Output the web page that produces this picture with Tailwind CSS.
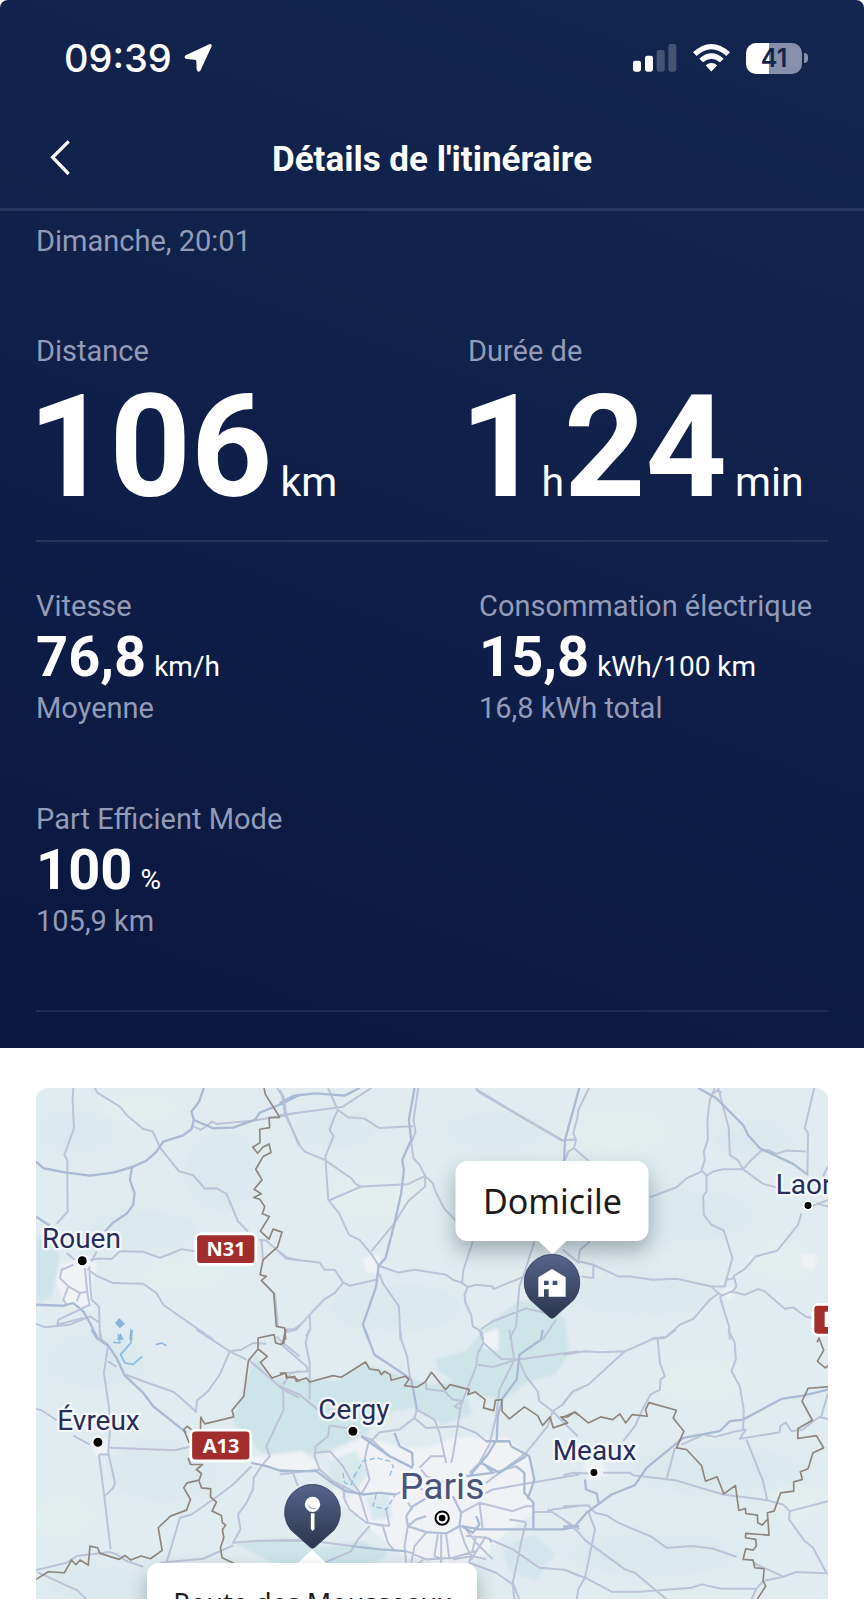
<!DOCTYPE html>
<html lang="fr">
<head>
  <meta charset="UTF-8">
  <meta name="viewport" content="width=device-width, initial-scale=1.0">
  <title>Détails de l'itinéraire</title>
  <script src="https://cdn.jsdelivr.net/npm/@tailwindcss/browser@4"></script>
</head>
<body class="bg-white font-['Roboto',sans-serif]">
  <div class="min-h-screen flex flex-col">
    <div class="rounded-t-lg bg-linear-200 from-[#13264f] via-[#0f1f49] to-[#0a1740] text-white pb-9">

      <!-- Status bar -->
      <div class="h-28 pt-1 pl-16 pr-14 flex items-center justify-between">
        <div class="flex items-center gap-3 font-['Inter',sans-serif]">
          <span class="text-[38px] font-medium">09:39</span>
          <svg class="w-7 h-7" viewBox="0 0 84 84" fill="#fff"><path d="M76 1 L5 34 Q-2 41 7 45 L33 47 Q37 47 37 52 L38 77 Q42 87 49 80 L83 7 Q84 -2 76 1Z"/></svg>
        </div>
        <div class="flex items-center gap-4">
          <svg class="w-11 h-7" viewBox="0 0 132 84">
            <rect x="0" y="50" width="24" height="33" rx="7" fill="#fff"/>
            <rect x="36" y="35" width="24" height="48" rx="7" fill="#fff"/>
            <rect x="71" y="18" width="24" height="65" rx="7" fill="#fff" fill-opacity=".22"/>
            <rect x="106" y="0" width="24" height="83" rx="7" fill="#fff" fill-opacity=".22"/>
          </svg>
          <svg class="w-[37px] h-7" viewBox="0 0 111 84" fill="#fff">
            <path d="M0 25 Q55 -25 111 25 L100 36 Q55 -4 11 36Z"/>
            <path d="M19 44 Q55 12 92 44 L81 55 Q55 33 30 55Z"/>
            <path d="M38 64 Q55 50 73 64 L56 82 Q55 83 54 82Z"/>
          </svg>
          <div class="flex items-center gap-[2px]">
            <div class="w-[56px] h-[31px] rounded-[10px] bg-linear-to-r from-white from-41% to-[#8690aa] to-41% text-center text-[25px] leading-[31px] font-semibold text-[#12254f] font-['Inter',sans-serif]">41</div>
            <div class="w-1 h-[10px] rounded-r-full bg-[#8690aa]"></div>
          </div>
        </div>
      </div>

      <!-- Header -->
      <header class="h-24 px-9 grid grid-cols-[48px_1fr_48px] items-center">
        <button aria-label="Retour" class="w-12 h-12 flex justify-center">
          <svg class="mt-1 w-5 h-9" viewBox="0 0 60 108" fill="none" stroke="#fff" stroke-width="10"><path d="M56 4 L8 52 L56 102"/></svg>
        </button>
        <h1 class="text-center text-[35px] font-bold">Détails de l'itinéraire</h1>
      </header>
      <div class="h-[3px] bg-[#273760]"></div>

      <div class="px-9">
        <p class="mt-[10px] text-[29px] leading-10 text-[#929bb8]">Dimanche, 20:01</p>

        <div class="mt-[70px] pb-5 grid grid-cols-2 gap-[72px] border-b-2 border-[#273459]">
          <div>
            <p class="text-[29px] leading-10 text-[#929bb8]">Distance</p>
            <p class="-ml-2 mt-[5px] flex items-baseline gap-2 whitespace-nowrap">
              <span class="text-[142px] leading-[144px] font-bold">106</span>
              <span class="text-[41px] leading-none">km</span>
            </p>
          </div>
          <div>
            <p class="text-[29px] leading-10 text-[#929bb8]">Durée de</p>
            <p class="-ml-2 mt-[5px] flex items-baseline whitespace-nowrap">
              <span class="text-[142px] leading-[144px] font-bold">1</span>
              <span class="text-[41px] leading-none">h</span>
              <span class="text-[142px] leading-[144px] font-bold">24</span>
              <span class="pl-2 text-[41px] leading-none">min</span>
            </p>
          </div>
        </div>

        <div class="mt-11 pb-[69px] grid grid-cols-2 gap-x-[94px] gap-y-[71px] border-b-2 border-[#202c55]">
          <div>
            <p class="text-[29px] leading-10 text-[#929bb8]">Vitesse</p>
            <p class="flex items-baseline gap-2 whitespace-nowrap">
              <span class="text-[56px] leading-[62px] font-bold">76,8</span>
              <span class="text-[28px] leading-none">km/h</span>
            </p>
            <p class="text-[29px] leading-10 text-[#929bb8]">Moyenne</p>
          </div>
          <div>
            <p class="text-[29px] leading-10 text-[#929bb8] whitespace-nowrap">Consommation électrique</p>
            <p class="flex items-baseline gap-2 whitespace-nowrap">
              <span class="text-[56px] leading-[62px] font-bold">15,8</span>
              <span class="text-[28px] leading-none">kWh/100 km</span>
            </p>
            <p class="text-[29px] leading-10 text-[#929bb8]">16,8 kWh total</p>
          </div>
          <div>
            <p class="text-[29px] leading-10 text-[#929bb8] whitespace-nowrap">Part Efficient Mode</p>
            <p class="flex items-baseline gap-2 whitespace-nowrap">
              <span class="text-[56px] leading-[62px] font-bold">100</span>
              <span class="text-[28px] leading-none">%</span>
            </p>
            <p class="text-[29px] leading-10 text-[#929bb8]">105,9 km</p>
          </div>
        </div>
      </div>
    </div>

    <!-- Map -->
    <div class="mx-9 mt-10 relative overflow-hidden rounded-t-xl">
      <svg class="block w-full" viewBox="0 0 2379 1536" fill="none" stroke-linejoin="round">
        <defs>
          <filter id="soft" x="-20%" y="-20%" width="140%" height="140%"><feGaussianBlur stdDeviation="22"/></filter>
          <filter id="edge" x="-10%" y="-10%" width="120%" height="120%"><feGaussianBlur stdDeviation="5"/></filter>
        </defs>
        <rect width="2379" height="1536" fill="#e0ecef"/>

        <!-- relief -->
        <g filter="url(#soft)">
          <g fill="#d9e9ee">
            <ellipse cx="120" cy="130" rx="120" ry="60"/><ellipse cx="560" cy="250" rx="110" ry="120"/><ellipse cx="320" cy="430" rx="170" ry="60"/>
            <ellipse cx="900" cy="120" rx="120" ry="60"/><ellipse cx="1080" cy="660" rx="200" ry="70"/><ellipse cx="1900" cy="380" rx="260" ry="80"/>
            <ellipse cx="2150" cy="150" rx="120" ry="50"/><ellipse cx="1820" cy="620" rx="220" ry="60"/><ellipse cx="380" cy="1150" rx="160" ry="90"/>
            <ellipse cx="2050" cy="1150" rx="260" ry="70"/><ellipse cx="1850" cy="1400" rx="260" ry="60"/><ellipse cx="180" cy="820" rx="150" ry="80"/>
            <ellipse cx="1380" cy="130" rx="160" ry="50"/><ellipse cx="180" cy="1490" rx="150" ry="50"/>
          </g>
          <g fill="#e4eeee">
            <ellipse cx="300" cy="60" rx="120" ry="40"/><ellipse cx="450" cy="560" rx="130" ry="40"/><ellipse cx="1000" cy="330" rx="150" ry="60"/>
            <ellipse cx="1750" cy="130" rx="150" ry="60"/><ellipse cx="2000" cy="880" rx="140" ry="50"/><ellipse cx="2250" cy="520" rx="100" ry="50"/>
            <ellipse cx="80" cy="1290" rx="90" ry="60"/><ellipse cx="2280" cy="1240" rx="90" ry="50"/>
          </g>
        </g>
        <!-- woodland -->
        <g fill="#cde4e8" filter="url(#edge)">
          <path d="M0 440 L70 500 50 620 0 650Z"/>
          <path d="M660 800 L700 870 900 880 990 830 1080 860 1180 890 1280 880 1310 980 1220 1010 1130 960 1040 980 990 1040 900 1080 720 1130 640 1060 590 1000Z"/>
          <path d="M1200 815 L1290 790 1370 700 1450 640 1550 650 1590 700 1600 800 1560 860 1480 880 1400 940 1300 910 1210 850Z"/>
          <path d="M600 1370 L740 1350 860 1380 980 1360 1060 1400 1000 1440 720 1430Z"/>
          <path d="M1400 1380 L1500 1340 1560 1400 1500 1480 1420 1450Z" fill="#d3e6eb"/>
        </g>
        <!-- built-up areas -->
        <g fill="#f0f2f6" filter="url(#edge)">
          <path d="M80 530 L150 500 185 530 165 600 170 670 90 650 60 580Z"/>
          <path d="M880 1100 L980 1050 1110 1080 1180 1080 1260 1050 1420 1050 1490 1120 1490 1280 1420 1330 1350 1400 1260 1440 1110 1410 1010 1330 900 1230Z"/>
          <path d="M630 1110 L800 1090 860 1140 780 1160 650 1130Z"/>
          <path d="M1340 740 L1390 720 1390 790 1340 780Z"/><path d="M980 510 L1035 500 1030 560 990 550Z"/>
          <path d="M170 1070 L220 1050 220 1100 180 1105Z"/><path d="M1640 1130 L1700 1120 1720 1165 1660 1180Z"/>
          <path d="M2075 600 L2100 600 2090 640 2060 620Z"/><path d="M2295 500 L2345 500 2340 545 2305 540Z"/>
        </g>
        <g fill="#d8e9ee" filter="url(#edge)">
          <path d="M880 1120 L960 1090 1000 1160 940 1230 880 1190Z"/><path d="M990 1230 L1060 1220 1070 1290 1010 1300Z"/>
        </g>

        <!-- north west -->
        <g transform="translate(-108 -84)">
          <path stroke="#bcc2d8" stroke-width="6" d="M220 84 L218 120 222 205 193 285 202 300 203 455 170 492 M285 84 L292 98 360 140 380 165 430 207 458 214 480 262 537 334 580 346 615 386 650 385 680 402 715 485 745 515 M270 600 L300 596 335 598 360 574 430 576 480 594 505 585 545 568 590 575 M262 628 L290 648 340 670 430 672 470 700 490 735 640 840 M582 200 L603 210 637 185 650 192 760 182 900 158 M833 84 L848 110 855 160 900 255 M785 540 L790 600 M778 540 L800 542 825 565 860 592 900 602 M825 700 L835 800 M270 735 L240 750 175 780 172 795 250 775 M108 792 L135 803 210 795 270 770 300 790 M255 625 L262 700 270 740 M268 620 L272 690 275 720 297 740 300 840 M205 680 L190 720 200 735 M220 615 L185 630 180 655 205 680 240 700 230 725 M240 700 L265 695 M200 580 L225 600 M290 575 L275 605 M855 810 L885 808 900 795"/>
          <path stroke="#a9bad4" stroke-width="7" d="M108 305 L130 325 200 338 270 347 340 338 400 320 440 302 470 275 490 245 550 226 575 208 582 180 575 155 598 125 612 84 M582 180 L640 205 700 203 765 180 780 158 850 130 900 104 M397 318 L390 360 404 400 400 435 380 462 340 488 315 515 M108 470 L150 498 M108 735 L190 738 220 730 250 755 270 790 295 840"/>
          <path stroke="#8f857d" stroke-width="5" d="M793 84 L797 103 840 172 808 173 810 203 780 208 781 248 759 262 774 280 789 262 808 252 814 278 790 290 768 328 787 360 763 388 785 402 762 413 780 418 795 440 788 462 809 470 782 514 808 538 820 508 847 517 833 562 790 600 781 645 800 650 785 662 822 700 830 800 855 805 858 840"/>
          <path fill="#8db4dc" d="M345 790 L358 776 376 792 360 806Z M350 840 L362 820 372 840Z M392 800 L398 840 388 840Z"/>
        </g>

        <!-- north -->
        <g transform="translate(732 -84)">
          <path stroke="#bcc2d8" stroke-width="6" d="M145 84 L175 150 205 172 255 176 298 204 400 199 M0 166 L190 140 275 84 M175 150 L163 175 150 210 162 228 137 290 146 420 178 460 208 525 240 540 275 582 298 618 M0 90 L12 110 20 165 55 250 75 275 135 300 215 355 228 372 245 380 385 373 437 348 M148 422 L245 380 M416 84 L402 180 408 215 395 250 402 295 420 315 437 348 437 380 385 425 345 490 275 575 M437 348 L460 370 468 395 495 447 530 483 M590 84 L600 98 850 242 888 238 M0 578 L20 597 120 608 135 630 165 630 190 667 210 678 260 667 290 660 M190 670 L165 700 135 718 90 765 50 810 20 818 M90 765 L92 810 78 830 M297 618 L355 638 405 630 500 645 520 660 545 668 565 682 590 675 640 680 642 688 730 652 M298 640 L310 670 358 740 363 840 M580 545 L552 630 548 668 M565 682 L555 705 558 730 575 765 580 800 605 815 612 840 M605 808 L640 785 740 746 800 760 M765 545 L735 640 720 680 710 800 690 840 M830 780 L810 810 790 840 M850 570 L900 610"/>
          <path stroke="#a9bad4" stroke-width="7" d="M0 130 L40 108 105 100 195 107 240 84 M405 84 L388 180 395 240 368 300 373 330 365 400 345 490 318 595 297 618 290 680 250 795 268 840"/>
          <path stroke="#bcc2d8" stroke-width="8" d="M590 88 L700 155 850 242"/>
        </g>

        <!-- north east -->
        <g transform="translate(1584 -84)">
          <path stroke="#bcc2d8" stroke-width="6" d="M77 84 L45 150 42 175 30 220 38 240 32 265 15 275 5 300 M5 240 L38 240 M32 265 L75 302 M455 84 L440 120 433 180 434 240 422 275 425 300 415 330 430 347 450 335 480 328 540 328 560 305 595 272 M465 84 L480 140 497 205 500 285 525 302 540 328 600 372 650 385 M450 100 L465 90 475 100 M595 272 L615 270 640 282 670 272 730 275 M753 84 L750 100 725 205 735 220 733 345 M260 412 L340 382 370 355 415 335 M430 347 L430 395 420 410 422 465 445 495 482 512 508 595 485 675 M715 460 L705 495 642 573 578 590 545 628 512 648 520 680 505 700 M48 605 L90 615 165 650 200 650 268 660 340 657 445 680 485 680 490 660 515 655 M90 615 L90 655 55 650 M45 605 L50 570 80 545 M445 682 L475 708 505 695 545 705 585 688 605 695 665 747 690 743 730 772 750 775 M465 702 L440 720 390 778 350 795 305 835 265 838 M470 710 L485 760 498 800 500 840 M795 320 L780 350 M745 440 L795 420 M760 430 L795 440"/>
          <path stroke="#a9bad4" stroke-width="7" d="M48 84 L5 240 2 310 M405 84 L460 115 540 195 555 225 590 265 690 312 735 345"/>
        </g>

        <!-- south west -->
        <g transform="translate(-108 726)">
          <path stroke="#bcc2d8" stroke-width="6" d="M300 0 L305 30 325 45 312 130 328 240 330 300 325 370 M325 95 L350 112 M378 135 L430 155 522 187 560 220 590 248 M590 0 L690 65 740 90 M690 65 L660 135 635 170 625 185 592 212 588 250 M690 65 L725 60 760 40 800 42 M108 238 L125 242 170 272 M220 318 L270 345 M330 355 L525 362 575 350 M297 375 L313 500 332 660 M325 370 L345 460 340 475 315 500 M297 375 L325 375 M108 722 L200 700 230 680 330 668 350 675 380 695 430 712 M500 700 L515 650 540 565 575 555 640 510 700 465 755 410 M785 410 L762 445 760 480 740 520 715 555 722 600 700 640 770 635 900 632 M480 700 L610 688 700 648 M112 728 L232 783 260 810 M850 180 L852 240 800 350 810 380 785 410 M880 430 L895 470 M750 93 L850 180 900 205 M850 165 L875 130 900 125 M830 20 L850 40 900 80"/>
          <path stroke="#a9bad4" stroke-width="7" d="M275 0 L290 25 325 48 350 85 375 138 430 190 460 230 560 310 M755 400 L800 410 840 423 900 425"/>
          <path stroke="#8db8e0" stroke-width="5" d="M397 0 L393 40 362 75 375 100 400 104 427 80 M340 38 L360 40 355 12 M468 45 L485 40 500 48"/>
          <path stroke="#8f857d" stroke-width="5" d="M858 0 L848 45 828 40 823 15 775 25 775 58 803 80 782 98 817 145 858 130 863 143 885 145 900 155 M775 58 L746 93 732 200 697 242 702 262 615 283 603 263 602 300 M575 300 L562 290 552 300 568 340 M565 385 L572 405 608 405 590 420 605 432 598 452 562 460 552 475 572 510 560 542 512 560 475 595 487 663 452 688 423 680 393 692 375 678 358 690 300 672 293 655 270 650 265 707 240 692 228 706 215 692 193 730 145 727 108 750 M598 455 L605 475 633 478 632 502 650 518 637 545 665 558 668 580 678 587 668 600 672 625 662 655 667 685 705 703"/>
        </g>

        <!-- Paris area -->
        <g transform="translate(732 726)">
          <path stroke="#bcc2d8" stroke-width="6" d="M362 0 L365 30 383 80 392 150 M88 0 L78 40 90 100 90 210 M0 170 L60 195 120 245 M0 40 L80 110 85 125 20 130 M600 0 L612 40 595 70 590 110 545 225 520 380 515 400 M612 40 L635 60 665 87 712 90 M595 105 L640 112 712 90 900 65 M690 0 L700 60 705 90 660 180 650 260 630 345 600 400 570 430 M720 95 L740 140 775 185 780 215 820 245 895 320 M820 245 L850 225 880 185 900 178 M820 245 L805 290 740 370 620 460 M440 160 L440 178 495 185 520 210 550 215 525 230 545 240 M412 240 L405 265 360 300 300 308 265 345 255 390 270 450 245 495 M245 320 L275 330 330 380 400 415 M412 240 L465 270 480 310 500 400 M405 265 L440 295 540 290 590 310 620 335 690 335 M150 285 L145 320 108 350 105 380 120 420 160 455 240 495 265 580 310 590 M108 370 L150 365 190 410 215 455 245 495 M155 288 L220 300 M190 500 L210 540 260 580 330 590 M190 470 L195 510 M270 590 L235 630 215 665 135 700 M0 635 L100 635 215 650 M420 415 L455 380 495 380 M425 420 L440 440 500 460 M310 590 L325 640 345 665 M320 540 L330 590 M350 495 L400 470 430 480 M380 700 L375 650 385 590 M400 540 L385 520 M440 610 L405 650 395 700 M475 615 L465 680 490 690 M500 615 L510 690 M485 615 L485 700 M540 590 L555 640 580 690 M560 600 L590 640 640 690 M620 620 L575 690 M640 430 L710 410 M600 500 L640 480 900 435 M545 550 L600 520 700 545 740 530 762 530 M600 520 L610 600 M690 570 L740 578 M740 580 L725 640 715 690 700 760 720 810 M590 620 L570 700 650 730 700 765 705 810 M560 620 L620 625 700 660 780 715 860 722 900 740 M765 548 L805 548 820 540 900 530 M805 540 L900 600 M120 420 L0 435 M430 690 L400 720 M520 690 L580 680 620 690 M380 665 L440 690 520 685 590 665"/>
          <path stroke="#b3bfd9" stroke-width="7" d="M380 560 L400 530 450 500 M520 500 L545 550 540 590 500 612 440 608 385 590 380 560 M385 590 L410 570 440 560"/>
          <path stroke="#a9bad4" stroke-width="7" d="M255 0 L285 75 360 125 395 150 405 200 412 240 M790 0 L785 30 720 75 712 150 670 205 655 260 652 330 625 375 570 440 M0 425 L110 425 150 455 200 485 250 495 300 490 350 495 M345 310 L360 350 398 370 400 410 M245 320 L330 380 400 415 M695 350 L750 380 765 450 745 510 M620 335 L690 335 695 350 M545 590 L600 600 850 600 900 590 M710 410 L735 430 735 490 762 520 762 600 M560 440 L640 430 620 410 M215 650 L300 660 380 665 M605 400 L660 430 740 380 M545 590 L580 610 600 585 590 560"/>
          <path stroke="#93bde0" stroke-width="4" stroke-dasharray="16 8" d="M225 440 L250 395 290 385 330 395 342 410 330 440 M290 495 L280 530 320 540 345 500 M190 430 L195 460 215 465 228 430 M630 625 L638 650"/>
          <path stroke="#8f857d" stroke-width="5" d="M0 130 L18 130 20 145 45 140 50 155 80 145 90 157 160 138 185 143 258 97 270 118 298 122 305 135 315 125 332 135 335 152 378 140 388 150 375 168 412 173 437 157 456 128 498 180 512 165 570 180 565 195 587 187 617 210 612 235 643 243 648 212 667 210 668 245 690 268 735 232 775 258 790 288 812 262 822 295 865 280 845 262 865 262 885 248 900 258 M0 45 L12 40 18 0"/>
        </g>

        <!-- south east -->
        <g transform="translate(1584 726)">
          <path stroke="#bcc2d8" stroke-width="6" d="M0 75 L65 65 110 68 185 65 275 25 310 22 338 0 M0 220 L30 185 75 165 185 65 M283 25 L290 100 305 140 292 150 290 180 262 195 240 235 215 290 180 335 M495 0 L515 40 518 90 505 125 530 170 542 240 540 300 M355 345 L400 325 420 315 455 322 520 305 548 300 530 328 650 308 652 290 668 278 685 305 720 300 750 275 770 262 795 268 M795 190 L775 260 M335 355 L310 450 M0 437 L30 430 75 432 M120 430 L200 430 210 437 335 452 480 495 610 512 660 525 680 545 795 515 M550 330 L600 455 612 510 M680 545 L678 570 725 635 750 655 790 730 M0 530 L75 527 95 550 130 558 165 580 265 622 310 655 390 650 450 658 520 682 M570 700 L660 742 700 728 795 732 M75 545 L95 600 65 745 45 780 40 810 M0 570 L45 608 65 632 185 720 215 730 310 810 M0 720 L65 745 145 787 230 787 385 775 415 765 475 778 580 778 600 755 660 742 M580 778 L565 810"/>
          <path stroke="#a9bad4" stroke-width="7" d="M0 592 L35 590 70 550 145 495 215 467 250 415 360 325 470 305 500 275 540 270 655 208 720 198 795 180 M65 450 L68 480 100 492 107 525"/>
          <path stroke="#8f857d" stroke-width="5" d="M0 262 L35 247 75 280 112 262 148 270 170 253 187 280 207 255 252 260 247 240 257 219 340 242 330 265 362 305 340 355 370 360 415 408 427 455 462 442 482 493 517 468 527 543 547 537 548 552 583 557 584 580 597 587 615 568 M795 172 L735 176 717 215 748 272 705 297 704 327 760 318 782 355 750 370 735 418 712 427 718 450 692 457 692 485 653 490 633 545 613 550 618 617 548 612 547 625 578 630 580 650 570 662 548 658 540 690 570 692 575 715 603 718 600 755 608 770 582 810 M762 38 L768 25 782 62 763 95 787 115 795 108"/>
        </g>

        <!-- road signs -->
        <g stroke="#fff" stroke-width="8" fill="#a12d2c">
          <rect x="480" y="438" width="180" height="92" rx="14"/>
          <rect x="465" y="1028" width="180" height="92" rx="14"/>
          <rect x="2334" y="650" width="180" height="92" rx="14"/>
        </g>
        <g fill="#fff" font-family="Noto Sans, sans-serif" font-weight="700" font-size="60" text-anchor="middle">
          <text x="571" y="505">N31</text>
          <text x="556" y="1096">A13</text>
        </g>
        <path d="M2374 672 V718" stroke="#fff" stroke-width="10"/>

        <!-- towns -->
        <g fill="#262d57" stroke="#f3f7fb" stroke-width="14" paint-order="stroke" font-family="Roboto, sans-serif" font-size="84">
          <text x="18" y="481">Rouen</text>
          <text x="2222" y="319">Laon</text>
          <text x="64" y="1028">Évreux</text>
          <text x="848" y="993">Cergy</text>
          <text x="1552" y="1117">Meaux</text>
        </g>
        <text x="1093" y="1236" font-family="Roboto, sans-serif" font-size="112" fill="#4a5379" stroke="#f3f7fb" stroke-width="14" paint-order="stroke">Paris</text>
        <g fill="#000" stroke="#fff" stroke-width="5">
          <circle cx="139" cy="519" r="16"/><circle cx="186" cy="1064" r="16"/><circle cx="952" cy="1031" r="16"/>
          <circle cx="1676" cy="1155" r="13"/><circle cx="2319" cy="353" r="13"/>
        </g>
        <circle cx="1220" cy="1292" r="20" fill="#fff" stroke="#000" stroke-width="6"/>
        <circle cx="1220" cy="1292" r="10" fill="#000"/>
      </svg>

      <!-- markers -->
      <div class="absolute left-[65.2%] top-[14.3%] -translate-x-1/2 flex flex-col items-center">
        <button class="w-[193px] h-20 rounded-xl bg-white text-[34px] text-[#1c1c1c] font-['Noto_Sans',sans-serif] shadow-[0_10px_20px_rgba(60,80,90,0.4)]">Domicile</button>
        <svg class="relative w-7 h-[13px]" viewBox="0 0 84 39" fill="#fff"><path d="M0 0 H84 L46 36 Q42 40 38 36Z"/></svg>
        <svg class="w-[57px] h-[65px]" viewBox="0 0 170 195">
          <defs><linearGradient id="pin" x2="0" y2="1"><stop stop-color="#56658a"/><stop offset="1" stop-color="#29364d"/></linearGradient></defs>
          <path fill="url(#pin)" stroke="#2b3a58" stroke-width="2" d="M85 1 A84 84 0 0 1 150 138 L92 190 Q85 196 78 190 L20 138 A84 84 0 0 1 85 1Z"/>
          <path fill="#fff" fill-rule="evenodd" d="M44 70 L85 45 126 70 V128 H75 V106 H61 V128 H44Z M61 80 V93 H75 V80Z M87 80 V93 H101 V80Z"/>
        </svg>
      </div>
      <div class="absolute left-[34.9%] top-[77.4%] -translate-x-1/2 flex flex-col items-center">
        <svg class="w-[57px] h-[65px]" viewBox="0 0 170 195">
          <path fill="url(#pin)" stroke="#2b3a58" stroke-width="2" d="M85 1 A84 84 0 0 1 150 138 L92 190 Q85 196 78 190 L20 138 A84 84 0 0 1 85 1Z"/>
          <circle cx="85" cy="61" r="23" fill="#fff"/>
          <path d="M70 61 A17 17 0 0 0 96 71 A22 22 0 0 1 70 61Z" fill="#54648b"/>
          <path d="M80 88 H91 V135 L85 141 80 135Z" fill="#fff"/>
        </svg>
        <svg class="w-7 h-[14px]" viewBox="0 0 84 42" fill="#fff"><path d="M0 42 H84 L46 5 Q42 0 38 5Z"/></svg>
        <button class="w-[330px] h-20 rounded-xl bg-white text-[27px] text-[#1c1c1c] font-['Noto_Sans',sans-serif] shadow-[0_10px_20px_rgba(60,80,90,0.4)]">Route des Mousseaux</button>
      </div>
    </div>
  </div>
</body>
</html>
